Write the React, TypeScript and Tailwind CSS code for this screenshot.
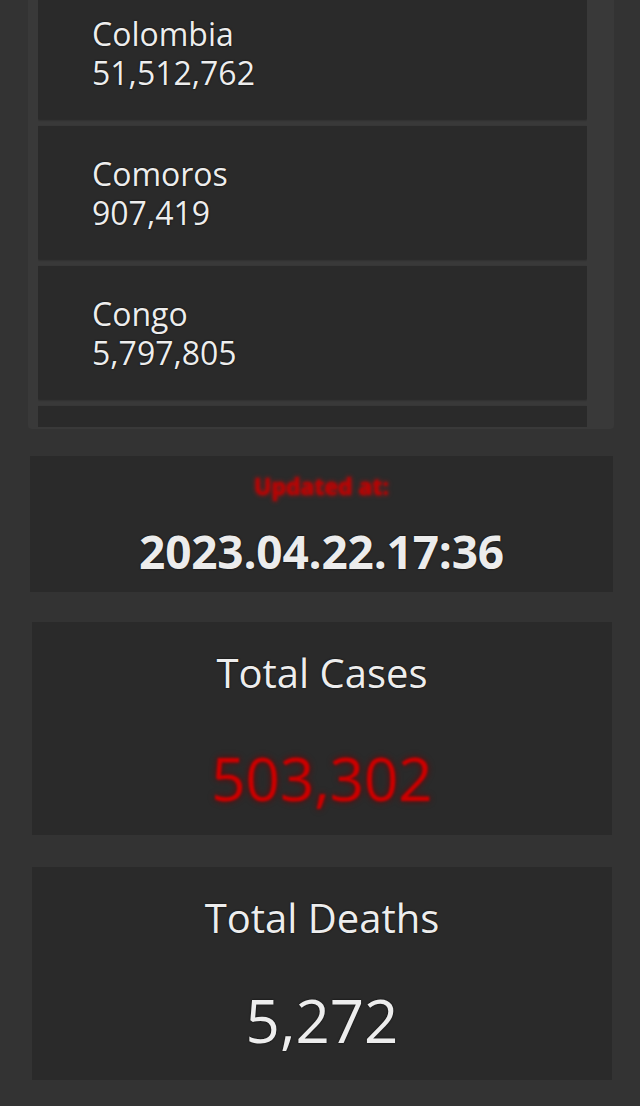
import React from "react";

const countries = [
  { name: "Colombia", pop: "51,512,762" },
  { name: "Comoros", pop: "907,419" },
  { name: "Congo", pop: "5,797,805" },
];

const font = { fontFamily: '"Open Sans", "Noto Sans", sans-serif' };

export default function App() {
  return (
    <div
      className="w-[640px] h-[1106px] overflow-hidden bg-[#333333] text-[#ededed]"
      style={font}
    >
      <div className="ml-[28px] w-[586px] mt-[-14px] bg-[#393939] rounded-b-[4px] pl-[10px] pr-[27px] pb-[2px]">
        <div className="h-[441px] overflow-hidden flex flex-col gap-[7px]">
          {countries.map((c, i) => (
            <div
              key={i}
              className="shrink-0 h-[133px] bg-[#2a2a2a] pl-[54px] pt-[28px] shadow-[0_1px_2px_rgba(0,0,0,0.35)]"
            >
              <div className="text-[32px] leading-[39px] [text-shadow:0_0_2px_#000]">
                {c.name}
              </div>
              <div className="text-[32px] leading-[39px] [text-shadow:0_0_2px_#000]">
                {c.pop}
              </div>
            </div>
          ))}
          <div className="shrink-0 h-[133px] bg-[#2a2a2a] shadow-[0_1px_2px_rgba(0,0,0,0.35)]" />
        </div>
      </div>

      <div className="ml-[30px] w-[583px] mt-[27px] h-[136px] bg-[#2a2a2a] flex flex-col items-center pt-[15px]">
        <div className="text-[23px] leading-[30px] font-bold text-[#c00000]/70 [text-shadow:0_0_4px_#e00000] blur-[1.2px]">
          Updated at:
        </div>
        <div className="mt-[25px] text-[46px] leading-[50px] font-bold tracking-[-0.2px] text-[#ececec] [text-shadow:0_0_2px_#000]">
          2023.04.22.17:36
        </div>
      </div>

      <div className="ml-[32px] w-[580px] mt-[30px] h-[213px] bg-[#2a2a2a] flex flex-col items-center pt-[26px]">
        <div className="text-[40px] leading-[50px] [text-shadow:0_0_2px_#000]">
          Total Cases
        </div>
        <div className="mt-[45px] text-[60px] leading-[70px] text-[#cc0000] [text-shadow:0_0_6px_#700000] blur-[0.8px]">
          503,302
        </div>
      </div>

      <div className="ml-[32px] w-[580px] mt-[32px] h-[213px] bg-[#2a2a2a] flex flex-col items-center pt-[26px]">
        <div className="text-[40px] leading-[50px] [text-shadow:0_0_2px_#000]">
          Total Deaths
        </div>
        <div className="mt-[42px] text-[60px] leading-[70px] [text-shadow:0_0_2px_#000]">
          5,272
        </div>
      </div>
    </div>
  );
}
